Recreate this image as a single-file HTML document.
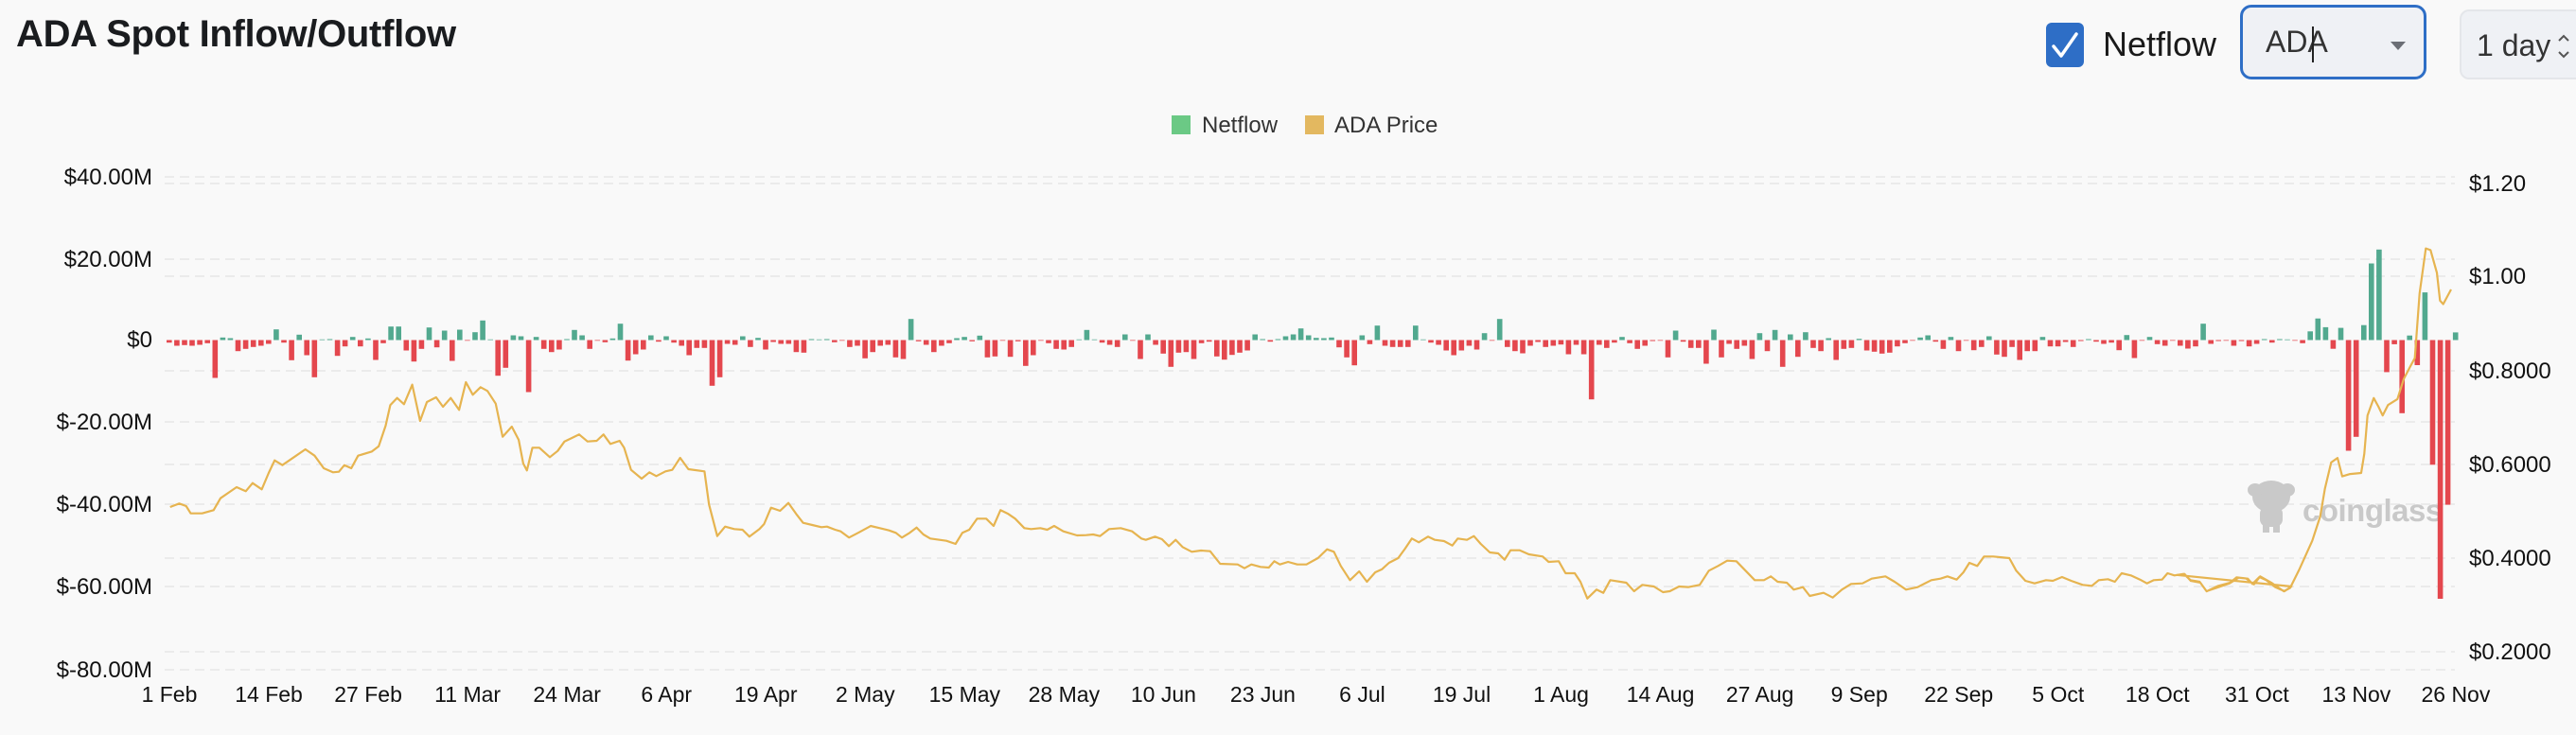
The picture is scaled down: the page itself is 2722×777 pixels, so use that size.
<!DOCTYPE html>
<html><head><meta charset="utf-8"><style>
html,body{margin:0;padding:0;background:#f9f9f9;width:2722px;height:777px;overflow:hidden;font-family:"Liberation Sans",sans-serif}
.t{position:absolute;left:17px;top:14px;font-size:40px;font-weight:bold;color:#1a1c1f;letter-spacing:-0.3px}
.cb{position:absolute;left:2162px;top:24px;width:40px;height:47px;background:#2e6ec6;border-radius:6px}
.nf{position:absolute;left:2222px;top:26px;font-size:36px;color:#1a1a1a}
.sel{position:absolute;left:2367px;top:5px;width:197px;height:79px;border:3px solid #2e6ec6;border-radius:12px;background:#eff1f5;box-sizing:border-box}
.sel span{position:absolute;left:24px;top:18px;font-size:32px;color:#333}
.sel i{position:absolute;left:73px;top:20px;width:2px;height:38px;background:#222}
.sel b{position:absolute;left:156px;top:36px;border-left:8px solid transparent;border-right:8px solid transparent;border-top:9px solid #6b6e75}
.day{position:absolute;left:2599px;top:10px;width:140px;height:74px;border:2px solid #e4e6ea;border-radius:10px;background:#eff1f5;box-sizing:border-box}
.day span{position:absolute;left:16px;top:18px;font-size:32px;color:#333}
</style></head><body>
<div class="t">ADA Spot Inflow/Outflow</div>
<div class="cb"><svg width="40" height="47"><path d="M8 25 L16 35 L32 12" stroke="#fff" stroke-width="3.5" fill="none" stroke-linecap="round" stroke-linejoin="round"/></svg></div>
<div class="nf">Netflow</div>
<div class="sel"><span>ADA</span><i></i><b></b></div>
<div class="day"><span>1 day</span><svg style="position:absolute;left:100px;top:22px" width="16" height="30"><path d="M3 9 L8 4 L13 9 M3 21 L8 26 L13 21" stroke="#555" stroke-width="2" fill="none"/></svg></div>
<svg id="c" width="2722" height="777" style="position:absolute;left:0;top:0" font-family="Liberation Sans, sans-serif">
<rect x="1238" y="122" width="20" height="20" fill="#6bc985"/>
<text x="1270" y="140" font-size="24" fill="#333">Netflow</text>
<rect x="1379" y="122" width="20" height="20" fill="#e3b860"/>
<text x="1410" y="140" font-size="24" fill="#333">ADA Price</text>
<g font-size="24" fill="#111" text-anchor="end">
<text x="161" y="195">$40.00M</text><text x="161" y="282">$20.00M</text><text x="161" y="367">$0</text>
<text x="161" y="454">$-20.00M</text><text x="161" y="541">$-40.00M</text><text x="161" y="628">$-60.00M</text><text x="161" y="716">$-80.00M</text>
</g>
<g font-size="24" fill="#111">
<text x="2609" y="202">$1.20</text><text x="2609" y="300">$1.00</text><text x="2609" y="400">$0.8000</text>
<text x="2609" y="499">$0.6000</text><text x="2609" y="598">$0.4000</text><text x="2609" y="697">$0.2000</text>
</g>
<g id="grid" stroke="#ebebeb" stroke-width="2" stroke-dasharray="10,6"></g>
<g font-size="23" fill="#111" text-anchor="middle" id="xl"></g>
<g fill="#c9c9c9">
<ellipse cx="2400" cy="525" rx="20" ry="17"/><ellipse cx="2383" cy="518" rx="8" ry="7"/><ellipse cx="2417" cy="518" rx="8" ry="7"/>
<rect x="2388" y="535" width="24" height="22" rx="8"/><rect x="2391" y="550" width="7" height="13"/><rect x="2402" y="550" width="7" height="13"/>
<text x="2433" y="551" font-size="33" font-weight="bold" fill="#c9c9c9" letter-spacing="-0.5">coinglass</text>
</g>
<g id="bars"></g>
<path id="pl" fill="none" stroke="#e6b450" stroke-width="2.2" stroke-linejoin="round"/>
</svg>
<script>
var NS="http://www.w3.org/2000/svg";
function el(p,t,a){var e=document.createElementNS(NS,t);for(var k in a)e.setAttribute(k,a[k]);p.appendChild(e);return e;}
var g=document.getElementById('grid');
[187,194,274,292,392,446,491,533,590,620,689,708].forEach(function(y){el(g,'line',{x1:174,x2:2594,y1:y,y2:y});});
var xl=document.getElementById('xl');
var labs=["1 Feb","14 Feb","27 Feb","11 Mar","24 Mar","6 Apr","19 Apr","2 May","15 May","28 May","10 Jun","23 Jun","6 Jul","19 Jul","1 Aug","14 Aug","27 Aug","9 Sep","22 Sep","5 Oct","18 Oct","31 Oct","13 Nov","26 Nov"];
labs.forEach(function(l,i){var t=el(xl,'text',{x:179+i*13*8.08,y:742});t.textContent=l;});
var z4=[-8,-18,-16,-18,-15,-10,-120,8,6,-35,-28,-22,-18,-12,34,-8,-64,17,-48,-118,2,3,-50,-20,10,-20,5,-63,-10,43,43,-33,-68,-28,40,-23,30,-66,33,-2,25,62,2,-113,-88,15,12,-165,10,-28,-38,-30,3,32,15,-28,-2,-7,5,52,-65,-45,-30,15,-5,12,-8,-18,-48,-25,-25,-145,-118,-12,-15,12,-22,7,-30,-6,-12,-12,-38,-40,3,2,3,-7,-2,-22,-18,-58,-38];
var z5=[-18,-15,-55,-60,67,-4,-15,-38,-18,-10,6,10,-4,14,-55,-52,-2,-53,-4,-82,-48,-2,-10,-28,-30,-22,2,32,2,-8,-15,-22,18,-2,-60,18,-15,-43,-85,-40,-38,-60,-10,-5,-52,-62,-47,-40,-33,18,3,-5,0,12,18,37,15,7,6,8,-23,-55,-80,15,-13,46,-18,-22,-22,-22,46,2,-8,-15,-33,-48,-33,-18,-30,22,-2,67,-22,-35,-42,-18,-6,-22,-18,-14,-45,-15,-45,-188];
var z6=[-15,-25,-8,10,-10,-28,-18,-3,-2,-55,30,-5,-25,-25,-75,33,-55,-12,-28,-18,-60,22,-35,32,-85,18,-53,25,-25,-35,6,-63,-28,-25,4,-33,-37,-43,-40,-20,-10,-2,8,15,-5,-28,10,-35,-2,-32,-22,12,-46,-53,-22,-63,-35,-35,10,-20,-20,-6,-22,-3,0,-5,-12,-8,-32,16,-57,-2,10,-13,-18,-2,-18,-27,-20,52,-12,-3,-2,-18,-3,-20,-12,3,-8,0,2,-2,-10];
var z2=[25,62,37,-25,35,-318,-278,43,220,260,-92,-12,-210,13,-72,137,-358,-743,-473,22];
var h=[];z4.concat(z5,z6).forEach(function(v){h.push(v/3);});z2.forEach(function(v){h.push(v/2.717);});
var bg=document.getElementById('bars'),Z=359.5;
h.forEach(function(v,i){var x=176+i*8.08;if(Math.abs(v)<0.5)v=v<0?-1:1;
el(bg,'rect',{x:x.toFixed(1),y:(v>0?Z-v:Z).toFixed(1),width:5.6,height:Math.abs(v).toFixed(1),fill:v>0?'#52a98f':'#e4474e'});});
var p4=[[20,708],[40,697],[55,705],[65,728],[90,728],[115,718],[130,680],[150,660],[165,645],[185,658],[200,632],[220,652],[235,600],[248,560],[265,575],[290,550],[315,525],[335,545],[355,585],[375,598],[388,596],[400,575],[415,585],[430,545],[460,532],[475,515],[490,450],[500,385],[515,362],[530,382],[548,320],[565,435],[580,375],[600,360],[615,390],[632,362],[650,400],[665,312],[680,352],[697,328],[712,340],[730,380],[745,485],[765,453],[780,495],[790,570],[798,592],[810,520],[825,520],[848,550],[865,530],[880,500],[895,490],[912,478],[930,500],[950,498],[965,478],[980,508],[1000,498],[1010,520],[1025,590],[1048,618],[1065,598],[1080,610],[1100,595],[1115,590],[1132,552],[1150,588],[1185,595],[1195,700],[1213,800],[1230,770],[1250,778],[1268,780],[1283,802],[1305,778],[1315,762],[1330,710],[1350,720],[1368,695],[1385,730],[1400,758],[1420,765],[1440,772],[1452,770],[1470,780],[1482,785],[1500,805],[1520,790],[1545,770]];
var p5=[[0,768],[20,775],[40,782],[55,790],[68,805],[85,790],[100,773],[115,795],[130,808],[165,815],[185,825],[200,790],[215,780],[232,745],[252,745],[268,768],[283,718],[300,730],[315,745],[335,775],[350,778],[370,775],[385,780],[400,768],[420,785],[450,798],[470,797],[485,795],[500,800],[520,778],[545,775],[570,785],[590,808],[600,812],[620,802],[635,810],[650,832],[665,812],[680,835],[700,850],[720,846],[740,848],[762,888],[800,890],[815,902],[830,890],[850,898],[868,900],[880,880],[892,890],[910,882],[930,890],[950,890],[975,870],[995,842],[1010,850],[1025,895],[1045,940],[1065,912],[1082,945],[1100,915],[1115,905],[1130,885],[1150,870],[1165,840],[1180,808],[1195,820],[1215,802],[1230,812],[1250,816],[1268,830],[1280,808],[1300,812],[1315,800],[1330,825],[1350,852],[1368,855],[1382,875],[1395,845],[1415,845],[1435,858],[1465,865],[1478,882],[1500,880],[1515,918],[1535,918]];
var p6=[[0,945],[15,998],[35,970],[50,980],[65,940],[100,948],[117,975],[135,955],[160,960],[180,978],[195,975],[215,960],[235,962],[260,955],[280,910],[300,895],[320,878],[340,880],[360,910],[380,940],[400,940],[415,928],[430,945],[450,948],[465,970],[485,962],[500,990],[530,980],[550,995],[570,970],[590,952],[615,950],[635,935],[665,928],[685,945],[710,970],[735,962],[765,940],[785,935],[800,928],[820,938],[835,915],[848,885],[865,895],[880,865],[900,865],[935,870],[950,910],[970,942],[990,950],[1015,940],[1030,942],[1050,930],[1070,942],[1095,955],[1115,958],[1130,940],[1150,937],[1165,945],[1180,918],[1200,925],[1220,938],[1235,950],[1250,940],[1268,938],[1280,918],[1295,925],[1315,920],[1330,940],[1350,945],[1365,975],[1385,965],[1415,950],[1435,932],[1455,935],[1465,952],[1480,930],[1495,940],[1515,962],[1535,975],[1550,960]];
var p2=[[0,1108],[25,1105],[45,1125],[75,1130],[95,1155],[130,1140],[170,1130],[190,1115],[220,1118],[245,1135],[265,1112],[300,1130],[340,1155],[360,1145],[390,1090],[430,1010],[455,940],[470,860],[490,785],[510,772],[525,825],[550,818],[585,815],[595,760],[605,650],[625,600],[640,625],[653,650],[670,620],[700,603],[720,545],[740,510],[755,485],[770,300],[790,170],[805,175],[825,240],[835,320],[845,330],[870,288]];
var pts=[];
p4.forEach(function(p){pts.push([170+p[0]*0.4847,300+p[1]/3]);});
p5.forEach(function(p){pts.push([920+p[0]*0.4847,300+p[1]/3]);});
p6.forEach(function(p){pts.push([1670+p[0]*0.4847,300+p[1]/3]);});
p2.forEach(function(p){pts.push([2300+p[0]/3,200+p[1]/2.717]);});
var d="M"+pts.map(function(p){return p[0].toFixed(1)+" "+p[1].toFixed(1);}).join(" L");
document.getElementById('pl').setAttribute('d',d);
</script>
</body></html>
